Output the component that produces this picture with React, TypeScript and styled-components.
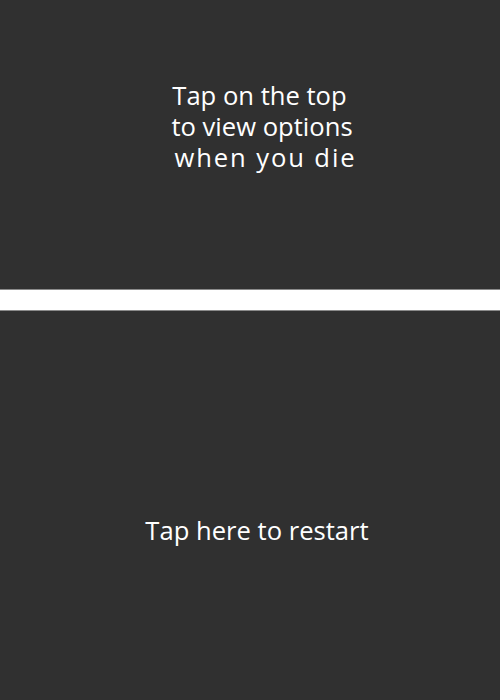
import React from "react";
import styled, { createGlobalStyle } from "styled-components";

const Global = createGlobalStyle`
  html, body { margin: 0; padding: 0; background: #303030; }
  #root { height: 700px; }
`;

const Screen = styled.div`
  height: 700px;
  width: 500px;
  display: flex;
  flex-direction: column;
  background: #303030;
  font-family: "Open Sans", "Noto Sans", sans-serif;
  color: #ffffff;
`;

const Panel = styled.div<{ $h?: number; $pad: number }>`
  ${(p) => (p.$h ? `height: ${p.$h}px;` : "flex: 1;")}
  background: #303030;
  display: flex;
  flex-direction: column;
  align-items: center;
  padding-top: ${(p) => p.$pad}px;
  box-sizing: border-box;
`;

const Divider = styled.div`
  height: 20px;
  background: #ffffff;
  border-top: 1px solid #8a8a8a;
  border-bottom: 1px solid #8a8a8a;
`;

const Line = styled.div<{ $ls?: number; $dx?: number }>`
  font-size: 25.6px;
  line-height: 31px;
  letter-spacing: ${(p) => p.$ls ?? 0}px;
  margin-left: ${(p) => p.$dx ?? 0}px;
  white-space: pre;
`;

export default function App() {
  return (
    <>
      <Global />
      <Screen>
        <Panel $h={289} $pad={80}>
          <Line $dx={19}>Tap on the top</Line>
          <Line $dx={24}>to view options</Line>
          <Line $dx={31} $ls={1.9}>when you die</Line>
        </Panel>
        <Divider />
        <Panel $pad={204}>
          <Line $dx={14}>Tap here to restart</Line>
        </Panel>
      </Screen>
    </>
  );
}
